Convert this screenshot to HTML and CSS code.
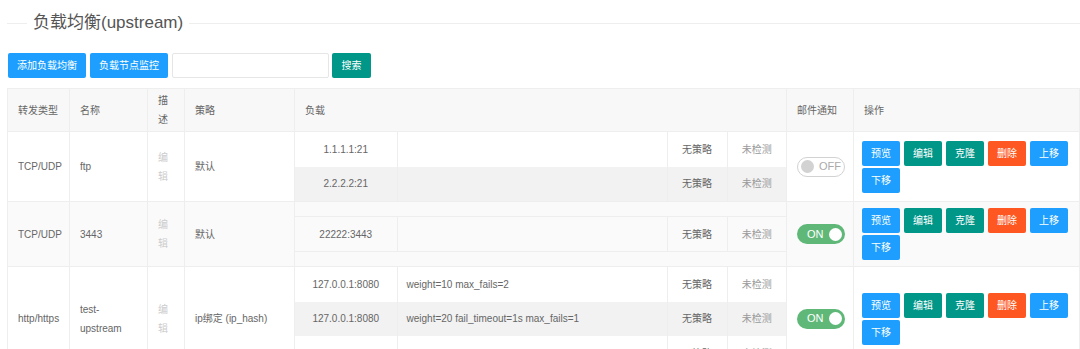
FILE: index.html
```
<!DOCTYPE html>
<html>
    <head>
        <meta charset="utf-8">
        <title>负载均衡(upstream)</title>
        <link rel="stylesheet" href="styles.css">
    </head>
    <body>
        <div class="page">
            <fieldset class="field-title">
                <legend>负载均衡(upstream)</legend>
            </fieldset>

            <div class="toolbar">
                <button type="button" class="btn btn-blue">添加负载均衡</button>
                <button type="button" class="btn btn-blue">负载节点监控</button>
                <input type="text" class="search-input">
                <button type="button" class="btn btn-green btn-search">搜索</button>
            </div>

            <table class="up-table">
                <colgroup>
                    <col style="width:62px">
                    <col style="width:78px">
                    <col style="width:37px">
                    <col style="width:110px">
                    <col style="width:492px">
                    <col style="width:67px">
                    <col>
                </colgroup>
                <thead>
                    <tr>
                        <th>转发类型</th>
                        <th>名称</th>
                        <th>描述</th>
                        <th>策略</th>
                        <th>负载</th>
                        <th>邮件通知</th>
                        <th>操作</th>
                    </tr>
                </thead>
                <tbody>
                    <tr>
                        <td>TCP/UDP</td>
                        <td>ftp</td>
                        <td class="desc">编辑</td>
                        <td>默认</td>
                        <td class="load">
                            <table class="inner">
                                <colgroup>
                                    <col style="width:102px"><col><col style="width:60px"><col style="width:59px">
                                </colgroup>
                                <tr><td class="addr">1.1.1.1:21</td><td class="param"></td><td class="mid">无策略</td><td class="mid check">未检测</td></tr>
                                <tr><td class="addr">2.2.2.2:21</td><td class="param"></td><td class="mid">无策略</td><td class="mid check">未检测</td></tr>
                            </table>
                        </td>
                        <td><span class="switch off"><i class="knob"></i><em>OFF</em></span></td>
                        <td class="ops">
                            <div class="ops-list">
                                <button type="button" class="btn btn-blue">预览</button>
                                <button type="button" class="btn btn-green">编辑</button>
                                <button type="button" class="btn btn-green">克隆</button>
                                <button type="button" class="btn btn-red">删除</button>
                                <button type="button" class="btn btn-blue">上移</button>
                                <button type="button" class="btn btn-blue">下移</button>
                            </div>
                        </td>
                    </tr>
                    <tr class="hover">
                        <td>TCP/UDP</td>
                        <td>3443</td>
                        <td class="desc">编辑</td>
                        <td>默认</td>
                        <td class="load">
                            <table class="inner single">
                                <colgroup>
                                    <col style="width:102px"><col><col style="width:60px"><col style="width:59px">
                                </colgroup>
                                <tr><td class="addr">22222:3443</td><td class="param"></td><td class="mid">无策略</td><td class="mid check">未检测</td></tr>
                            </table>
                        </td>
                        <td><span class="switch on"><em>ON</em><i class="knob"></i></span></td>
                        <td class="ops">
                            <div class="ops-list">
                                <button type="button" class="btn btn-blue">预览</button>
                                <button type="button" class="btn btn-green">编辑</button>
                                <button type="button" class="btn btn-green">克隆</button>
                                <button type="button" class="btn btn-red">删除</button>
                                <button type="button" class="btn btn-blue">上移</button>
                                <button type="button" class="btn btn-blue">下移</button>
                            </div>
                        </td>
                    </tr>
                    <tr>
                        <td>http/https</td>
                        <td>test-upstream</td>
                        <td class="desc">编辑</td>
                        <td>ip绑定 (ip_hash)</td>
                        <td class="load">
                            <table class="inner">
                                <colgroup>
                                    <col style="width:102px"><col><col style="width:60px"><col style="width:59px">
                                </colgroup>
                                <tr><td class="addr">127.0.0.1:8080</td><td class="param">weight=10 max_fails=2</td><td class="mid">无策略</td><td class="mid check">未检测</td></tr>
                                <tr><td class="addr">127.0.0.1:8080</td><td class="param">weight=20 fail_timeout=1s max_fails=1</td><td class="mid">无策略</td><td class="mid check">未检测</td></tr>
                                <tr><td class="addr"></td><td class="param"></td><td class="mid">无策略</td><td class="mid check">未检测</td></tr>
                            </table>
                        </td>
                        <td><span class="switch on"><em>ON</em><i class="knob"></i></span></td>
                        <td class="ops">
                            <div class="ops-list">
                                <button type="button" class="btn btn-blue">预览</button>
                                <button type="button" class="btn btn-green">编辑</button>
                                <button type="button" class="btn btn-green">克隆</button>
                                <button type="button" class="btn btn-red">删除</button>
                                <button type="button" class="btn btn-blue">上移</button>
                                <button type="button" class="btn btn-blue">下移</button>
                            </div>
                        </td>
                    </tr>
                </tbody>
            </table>
        </div>
    </body>
</html>
```
FILE: styles.css
```
body{
    margin: 0;
    font-family: "Liberation Sans", "Noto Sans CJK SC", sans-serif;
    font-size: 10px;
    color: #666;
    background-color: #fff;
}
.page{
    padding-left: 7px;
}

/* title */
.field-title{
    margin: 10px 0 0 0;
    padding: 0;
    border: none;
    border-top: 1px solid #eee;
}
.field-title legend{
    margin-left: 20px;
    padding: 0 6px;
    font-size: 17px;
    line-height: 26px;
    color: #555;
}

/* toolbar */
.toolbar{
    display: flex;
    align-items: center;
    gap: 4px;
    margin-top: 17px;
    margin-left: 1px;
}
.search-input{
    width: 157px;
    height: 25px;
    box-sizing: border-box;
    border: 1px solid #e6e6e6;
    border-radius: 2px;
    margin-left: 0;
    margin-right: -1px;
    outline: none;
}
.btn{
    height: 25px;
    padding: 0 9px;
    border: none;
    border-radius: 2px;
    font-family: inherit;
    font-size: 10px;
    line-height: 25px;
    color: #fff;
    cursor: pointer;
    white-space: nowrap;
}
.btn-search{
    width: 39px;
    padding: 0;
}
.btn-blue{
    background-color: #1e9fff;
}
.btn-green{
    background-color: #009688;
}
.btn-red{
    background-color: #ff5722;
}

/* main table */
.up-table{
    margin-top: 10px;
    width: 1073px;
    table-layout: fixed;
    border-collapse: collapse;
}
.up-table > thead > tr > th,
.up-table > tbody > tr > td{
    border: 1px solid #eee;
    padding: 0 10px;
    line-height: 19px;
    text-align: left;
    vertical-align: middle;
}
.up-table > thead > tr > th{
    height: 42px;
    font-weight: normal;
    background-color: #f8f8f8;
}
.up-table > tbody > tr.hover > td{
    background-color: #fafafa;
}
.up-table > tbody > tr > td.desc{
    color: #ccc;
}
.up-table > tbody > tr > td.load{
    padding: 0;
}
.up-table > tbody > tr > td.ops{
    padding: 6px 8px;
}
.ops-list{
    display: flex;
    flex-wrap: wrap;
    gap: 2px 4px;
}
.ops-list .btn{
    width: 38px;
    padding: 0;
}

/* nested load table */
.inner{
    width: 100%;
    table-layout: fixed;
    border-collapse: collapse;
    border-style: hidden;
}
.inner td{
    height: 34.5px;
    padding: 0 9px;
    border-left: 1px solid #eee;
    border-right: 1px solid #eee;
    line-height: 19px;
    white-space: nowrap;
}
.inner tr:nth-child(odd) td{
    background-color: #fff;
}
.inner tr:nth-child(even) td{
    background-color: #f2f2f2;
}
.inner.single{
    border-top: 1px solid #eee;
    border-bottom: 1px solid #eee;
}
.inner.single tr td{
    height: 34px;
    background-color: #fafafa;
}
.inner td.addr,
.inner td.mid{
    text-align: center;
}
.inner td.check{
    color: #999;
}

/* mail switch */
.switch{
    display: flex;
    align-items: center;
    width: 48px;
    height: 20px;
    box-sizing: border-box;
    border-radius: 10px;
}
.switch em{
    font-style: normal;
    font-size: 11px;
}
.switch .knob{
    display: block;
    width: 13px;
    height: 13px;
    border-radius: 50%;
}
.switch.off{
    border: 1px solid #d2d2d2;
    background-color: #fff;
    padding-left: 3px;
    gap: 5px;
}
.switch.off em{
    color: #aaa;
}
.switch.off .knob{
    background-color: #d2d2d2;
}
.switch.on{
    background-color: #5fb878;
    padding-left: 10px;
    gap: 5px;
}
.switch.on em{
    color: #fff;
}
.switch.on .knob{
    background-color: #fff;
}
```
